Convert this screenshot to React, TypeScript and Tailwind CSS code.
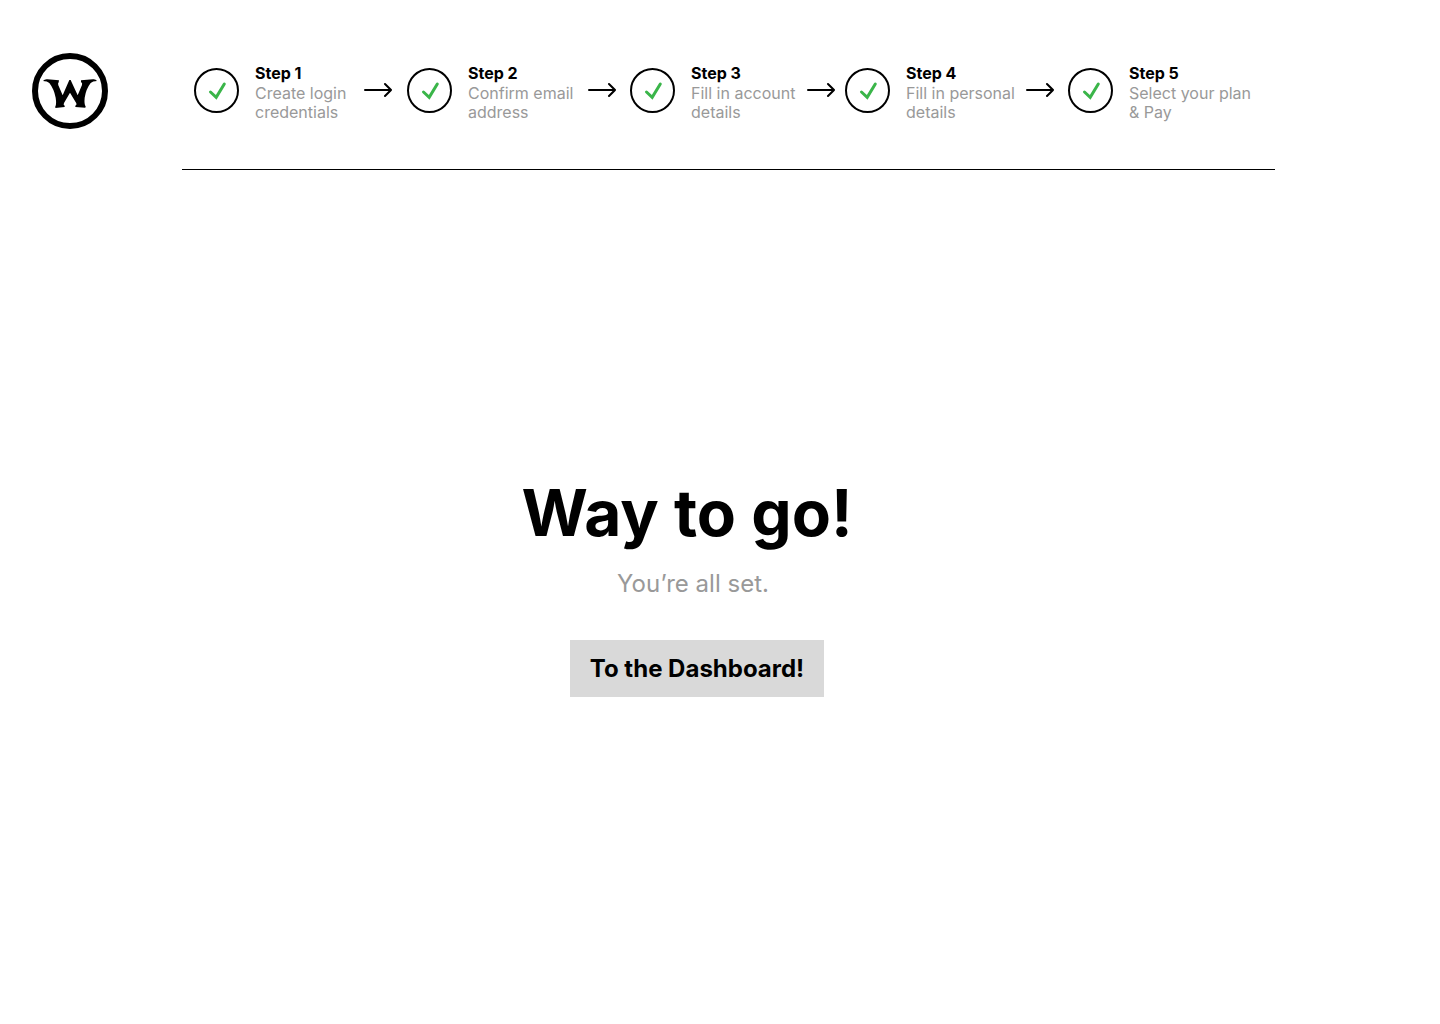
type Step = { title: string; text: string; item: string; label: string };

const steps: Step[] = [
  { title: "Step 1", text: "Create login credentials", item: "w-[213px]", label: "w-[99px]" },
  { title: "Step 2", text: "Confirm email address", item: "w-[223px]", label: "w-[110px]" },
  { title: "Step 3", text: "Fill in account details", item: "w-[215px]", label: "w-[106px]" },
  { title: "Step 4", text: "Fill in personal details", item: "w-[223px]", label: "w-[110px]" },
  { title: "Step 5", text: "Select your plan & Pay", item: "", label: "w-[130px]" },
];

function Logo() {
  return (
    <svg viewBox="21 24 228 228" className="size-[76px]" role="img" aria-label="W logo">
      <circle cx="135" cy="138" r="105" fill="none" stroke="#000" strokeWidth="18" />
      <path
        d="M54 108 Q59 102 67 103 L102 106 L101 112 Q98 115 100 121 L113 151 L130 112 L133 105 L137 105 L140 112 L158 151 L171 120 Q173 114 168 111 L168 106 L204 103 Q212 102 216 108 Q203 108 197 114 Q183 132 179 158 Q177 178 182 184 L181 188 L151 186 L151 182 Q156 180 154 175 L135 143 L117 174 Q114 180 119 182 L119 186 L91 189 L91 184 Q95 178 92 158 Q87 132 73 114 Q67 108 54 108Z"
        fill="#000"
      />
    </svg>
  );
}

function Check() {
  return (
    <span className="flex size-[45px] shrink-0 items-center justify-center rounded-full border-2 border-black">
      <svg viewBox="2 2 41 41" className="size-full" fill="none" stroke="#3ab549" strokeWidth="3" aria-hidden="true">
        <path d="M16.5 24 L22.2 29.3 L30.3 16" strokeLinecap="round" />
      </svg>
    </span>
  );
}

function Arrow() {
  return (
    <svg viewBox="0 0 28 17" className="ml-2.5 h-[17px] w-7 shrink-0" fill="none" stroke="#000" strokeWidth="2" strokeLinecap="round" aria-hidden="true">
      <path d="M1 8 H27 M21 2 L27 8 L21 14" />
    </svg>
  );
}

export default function App() {
  return (
    <div className="min-h-screen bg-white font-['Inter',sans-serif] text-black">
      <header className="flex items-start pl-8 pt-[53px]">
        <a href="#" className="shrink-0">
          <Logo />
        </a>
        <nav aria-label="Progress" className="ml-[74px] border-b border-black pb-[47px] pl-3 pr-4 pt-1.5">
          <ol className="flex">
            {steps.map((s, i) => (
              <li key={s.title} className={`flex items-center ${s.item}`}>
                <Check />
                <div className={`ml-4 shrink-0 pt-1 ${s.label}`}>
                  <p className="text-base font-bold leading-5">{s.title}</p>
                  <p className="mt-px text-base leading-[19px] text-[#999999]">{s.text}</p>
                </div>
                {i < steps.length - 1 && <Arrow />}
              </li>
            ))}
          </ol>
        </nav>
      </header>
      <main className="flex flex-col items-center pr-[54px] pt-[304px]">
        <h1 className="pr-3 text-[64px] font-bold leading-[77px]">Way to go!</h1>
        <p className="mt-[18px] text-2xl leading-[29px] text-[#999999]">You’re all set.</p>
        <div className="mt-[42px] pl-2">
          <button type="button" className="bg-[#d9d9d9] px-5 py-3.5 text-2xl font-bold leading-[29px]">
            To the Dashboard!
          </button>
        </div>
      </main>
    </div>
  );
}
